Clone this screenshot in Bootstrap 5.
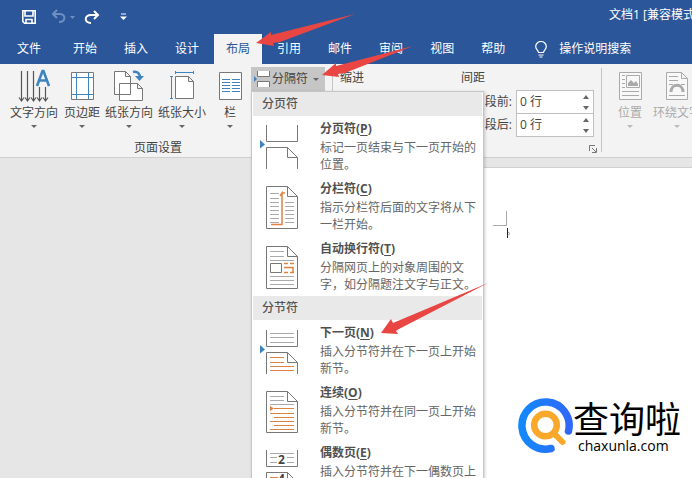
<!DOCTYPE html>
<html lang="zh-CN">
<head>
<meta charset="utf-8">
<meta name="viewport" content="width=device-width, initial-scale=1">
<title>文档1</title>
<link href="https://cdn.jsdelivr.net/npm/bootstrap@5.3.0/dist/css/bootstrap.min.css" rel="stylesheet">
<style>
body{font-family:"Open Sans","Noto Sans CJK SC",sans-serif;font-size:12px;line-height:16px;color:#444;background:#e6e6e6}
svg{display:block;flex:none}
.app-head{background:#2b579a;color:#fff}
.title-bar{height:34px;padding-left:22px;white-space:nowrap}
.quick-btn{border:0;background:none;color:#fff;padding:0}
.doc-title{margin-left:482px;padding-bottom:4px}
.tab-bar{height:30px;padding-left:5px;gap:3px}
.tab-bar .nav-link{color:#fff;padding:7px 12px;height:30px;line-height:16px;border-radius:0}
.tab-bar .nav-link.active{background:#f3f3f3;color:#2b579a}
.tab-file{margin-right:5px}
.tell-me{margin-left:15px;gap:12px;color:#fff;white-space:nowrap}
.ribbon{height:94px;background:#f3f3f3;border-bottom:1px solid #cfcfcf}
.group-page{width:332px;padding:3px 0 0 8px;flex:none}
.tool{border:0;background:none;padding:2px 0 0;color:#444;width:52px;white-space:nowrap;flex:none}
.tool-44{width:44px}.tool-50{width:50px}.tool-56{width:56px}.tool-40{width:40px}
.tool .tool-name{margin-top:2px}
.caret-s{width:0;height:0;border:3px solid transparent;border-top-color:#666;border-bottom:0;margin:4px auto 0}
.group-name{margin-right:24px;margin-top:12px}
.break-area{margin-left:1px}
.break-btn{border:0;border-radius:0;background:#c6c6c6;color:#444;height:24px;width:74px;padding:0 0 0 2px;gap:1px;white-space:nowrap}
.break-btn .caret-s{margin:0 0 0 4px}
.v-rule{width:1px;background:#c4c4c4;margin:4px 0 5px;flex:none}
.group-para{width:268px;padding:6px 0 0 7px;flex:none}
.indent-col{width:121px}
.space-row{padding:0 7px 0 0}
.spin-box{width:78px;height:24px;border:1px solid #c0c0c0;background:#fff;margin-bottom:-1px}
.spin-box input{border:0;background:none;width:56px;padding:0 3px;color:#444;outline:0}
.spin-box button{border:0;background:none;padding:0;width:15px;height:11px}
.spin-box button svg{margin:auto}
.group-pos{padding:3px 0 0 3px}
.group-pos .tool{color:#aaa}
.group-pos .caret-s{border-top-color:#bbb}
.break-menu{top:24px;left:0;width:233px;min-width:0;padding:0;border:1px solid #c6c6c6;border-radius:0;box-shadow:1px 1px 3px #0003;background:#fff;font-size:12px;color:#666}
.break-menu .dropdown-header{height:24px;padding:4px 9px;margin:0 1px;background:#e9e9e9;color:#555;font-size:12px;line-height:16px;font-weight:500}
.break-menu .dropdown-item{height:60px;padding:5px 5px 3px 6px;color:#666;font-size:12px;line-height:17px;gap:21px}
.break-menu .dropdown-item svg{margin-top:1px}
.item-name{line-height:16px;margin-bottom:2px;font-weight:700;color:#505050}
.item-name u{text-underline-offset:2px}
.paper{background:#fff;margin:9px 0 0 252px;border-top:1px solid #d0d0d0;padding:43px 0 0 240px}
.arrows{left:0;top:0;pointer-events:none;z-index:1100}
.brand{right:11px;bottom:24px;color:#000}
.brand-logo{margin-top:2px}
.brand-cn{font-size:36px;line-height:42px;font-family:"Noto Sans CJK SC",sans-serif}
.brand-en{font-size:14px;font-weight:500;line-height:16px;padding-left:5px}
</style>
<script src="https://cdn.jsdelivr.net/npm/bootstrap@5.3.0/dist/js/bootstrap.bundle.min.js"></script>
</head>
<body class="vh-100 overflow-hidden position-relative d-flex flex-column">
<header class="app-head">
  <div class="title-bar d-flex align-items-center">
    <button class="quick-btn" aria-label="保存"><svg width="14" height="14" fill="none" stroke="#fff" stroke-width="1.6"><path d="M.8.8h12.4v12.4H2.5L.8 11.500z"/><path d="M3 1v5h8V1M4 13V9.500h6V13"/></svg></button>
    <button class="quick-btn ms-3" aria-label="撤销"><svg width="24" height="16" fill="none" stroke="#6f8fc0" stroke-width="2"><path d="M5 1 1 5l4 4M1 5h7c6 0 6 8-1 8"/><path d="M18 7h5l-2.500 3z" fill="#6f8fc0" stroke="none"/></svg></button>
    <button class="quick-btn ms-2" aria-label="重做"><svg width="16" height="15" fill="none" stroke="#fff" stroke-width="2"><path d="M10 1l4 4-4 4M14 5H7C0 5 0 13 7 13"/></svg></button>
    <button class="quick-btn ms-3 ps-1" aria-label="自定义"><svg width="7" height="8"><path d="M1 1h5" stroke="#fff"/><path d="M0 3.500h7L3.500 7z" fill="#fff"/></svg></button>
    <span class="doc-title">文档1 [兼容模式]</span>
  </div>
  <nav class="tab-bar nav flex-nowrap align-items-center text-nowrap">
    <a class="nav-link tab-file" href="#">文件</a>
    <a class="nav-link" href="#">开始</a>
    <a class="nav-link" href="#">插入</a>
    <a class="nav-link" href="#">设计</a>
    <a class="nav-link active" aria-current="page" href="#">布局</a>
    <a class="nav-link" href="#">引用</a>
    <a class="nav-link" href="#">邮件</a>
    <a class="nav-link" href="#">审阅</a>
    <a class="nav-link" href="#">视图</a>
    <a class="nav-link" href="#">帮助</a>
    <a class="tell-me d-flex align-items-center text-decoration-none" href="#"><svg width="12" height="17" fill="none" stroke="#fff" stroke-width="1.200"><path d="M3.500 11.500c0-2-2.800-3-2.800-6a5.300 5 0 0 1 10.600 0c0 3-2.800 4-2.800 6zM3.500 14h5M4.500 16h3"/></svg>操作说明搜索</a>
  </nav>
</header>

<section class="ribbon d-flex" aria-label="布局">
  <div class="group-page">
    <div class="d-flex align-items-start">
      <button class="tool"><svg class="mx-auto" width="32" height="34" fill="none" stroke="#555"><path d="M3.500 2v29M9.500 2v29M15.500 2v29M21.500 18v13M27.500 18v13M1 28.500 3.500 32 6 28.500M7 28.500 9.500 32 12 28.500M13 28.500 15.500 32 18 28.500M19 28.500 21.500 32 24 28.500M25 28.500 27.500 32 30 28.500" stroke-width="1.200"/><path d="M19 17 24.500 2h1L31 17M21 11.500h8" stroke="#3f83bf" stroke-width="2.600"/></svg><div class="tool-name">文字方向</div><div class="caret-s"></div></button>
      <button class="tool tool-44"><svg class="mx-auto" width="24" height="34" fill="#fff" stroke="#777"><path d="M1.500 3.500h22v27h-22z"/><path d="M6.500 4v26M18.500 4v26M2 8.500h21M2 25.500h21" stroke="#3f83bf"/></svg><div class="tool-name">页边距</div><div class="caret-s"></div></button>
      <button class="tool tool-50"><svg class="mx-auto" width="32" height="34" fill="#fff" stroke="#777"><path d="M1.500 2.500h11l5 5v18h-16zM12.500 2.500v5h5M6.500 14.500h18l5 5v12h-23zM24.500 14.500v5h5"/><path d="M20 3c5-1 7 2 7 6" fill="none" stroke="#3f83bf" stroke-width="2.500"/><path d="M22 7h9l-4.500 5z" fill="#3f83bf" stroke="none"/></svg><div class="tool-name">纸张方向</div><div class="caret-s"></div></button>
      <button class="tool tool-56"><svg class="mx-auto" width="26" height="34" fill="#fff" stroke="#777"><path d="M6.500 7.500h13l5 5v17h-18zM19.500 7.500v5h5"/><path d="M6 3.500h19M6.500 2v3M24.500 2v3M2.500 7v23M1 7.500h3M1 29.500h3" stroke="#3f83bf"/></svg><div class="tool-name">纸张大小</div><div class="caret-s"></div></button>
      <button class="tool tool-40"><svg class="mx-auto" width="24" height="34" fill="#fff" stroke="#777"><path d="M1.500 3.500h22v27h-22z"/><path d="M4 10.500h8M14 10.500h8M4 13.500h8M14 13.500h8M4 16.500h8M14 16.500h8M4 19.500h8M14 19.500h8M4 22.500h8M14 22.500h8" stroke="#3f83bf"/></svg><div class="tool-name">栏</div><div class="caret-s"></div></button>
      <div class="dropdown break-area">
        <button class="break-btn d-flex align-items-center" aria-expanded="true"><svg width="18" height="20" fill="#fff" stroke="#777"><path d="M4.500 2v5.500h12V2M4.500 18v-5.500h12V18"/><path d="M1 7l3 3-3 3z" fill="#3f83bf" stroke="none"/></svg><span>分隔符</span><span class="caret-s"></span></button>
        <div class="dropdown-menu show break-menu position-absolute m-0">
          <h6 class="dropdown-header">分页符</h6>
          <button class="dropdown-item d-flex text-wrap"><svg width="41" height="48" fill="none" stroke="#777"><path d="M8.500 3v16.500h31V3M8.500 47V25.500h21l10 10V47M29.500 25.500v10h10"/><path d="M2 18l5 4.500-5 4z" fill="#3f83bf" stroke="none"/></svg><div><div class="item-name">分页符(<u>P</u>)</div>标记一页结束与下一页开始的位置。</div></button>
          <button class="dropdown-item d-flex text-wrap"><svg width="41" height="48" fill="none" stroke="#777"><path d="M8.500 4.500h21l10 10v32h-31zM29.500 4.500v10h10"/><path d="M12 11.500h9M12 16.500h9M12 20.500h9M12 24.500h9M12 28.500h9M12 32.500h9M12 36.500h9M12 40.500h9M27 20.500h9M27 24.500h9M27 28.500h9M27 32.500h9M27 36.500h9M27 40.500h9" stroke="#aaa"/><path d="M13 42.500h11V11l-2 3M24 11h3" stroke="#dd8344" stroke-width="1.500"/></svg><div><div class="item-name">分栏符(<u>C</u>)</div>指示分栏符后面的文字将从下一栏开始。</div></button>
          <button class="dropdown-item d-flex text-wrap"><svg width="41" height="48" fill="none" stroke="#777"><path d="M8.500 4.500h21l10 10v32h-31zM29.500 4.500v10h10M12.500 21.500h11v9h-11z"/><path d="M12 9.500h14M12 14.500h14M12 18.500h24M12 34.500h24M12 38.500h24M12 42.500h24" stroke="#aaa"/><path d="M26 21.500h4M32 21.500h4M26 25.500h9v5M26 30.500h4M32 30.500h4" stroke="#dd8344" stroke-width="1.500"/></svg><div><div class="item-name">自动换行符(<u>T</u>)</div>分隔网页上的对象周围的文字，如分隔题注文字与正文。</div></button>
          <h6 class="dropdown-header">分节符</h6>
          <button class="dropdown-item d-flex text-wrap"><svg width="41" height="48" fill="none" stroke="#777"><path d="M8.500 4v16.500h31V4M8.500 48V26.500h21l10 10V48M29.500 26.500v10h10"/><path d="M12 7.500h24M12 11.500h24M12 16.500h24" stroke="#aaa"/><path d="M12 31.500h14M12 36.500h14M12 40.500h24M12 44.500h24" stroke="#dd8344"/><path d="M2 19l5 4.500-5 4z" fill="#3f83bf" stroke="none"/></svg><div><div class="item-name">下一页(<u>N</u>)</div>插入分节符并在下一页上开始新节。</div></button>
          <button class="dropdown-item d-flex text-wrap"><svg width="41" height="48" fill="none" stroke="#777"><path d="M8.500 5.500h21l10 10v31h-31zM29.500 5.500v10h10"/><path d="M12 10.500h14M12 14.500h14M12 18.500h24" stroke="#aaa"/><path d="M16 22.500h20M12 27.500h24M16 31.500h20M12 35.500h24M16 39.500h20M12 43.500h24" stroke="#dd8344"/><path d="M12 20l4 2.500-4 2.500z" fill="#dd8344" stroke="none"/></svg><div><div class="item-name">连续(<u>O</u>)</div>插入分节符并在同一页上开始新节。</div></button>
          <button class="dropdown-item d-flex text-wrap"><svg width="41" height="48" fill="none" stroke="#777"><path d="M8.500 4v16.500h31V4M8.500 48V26.500h21l10 10V48M29.500 26.500v10h10"/><path d="M12 7.500h24M12 11.500h7M29 11.500h7M12 16.500h7M29 16.500h7" stroke="#aaa"/><path d="M12 31.500h8M12 36.500h6" stroke="#dd8344"/><text x="20" y="18" font-size="12" font-weight="700" fill="#444" stroke="none">2</text><text x="20" y="37" font-size="12" font-weight="700" fill="#444" stroke="none">4</text></svg><div><div class="item-name">偶数页(<u>E</u>)</div>插入分节符并在下一偶数页上开始新节。</div></button>
        </div>
      </div>
    </div>
    <div class="group-name text-center">页面设置</div>
  </div>
  <div class="v-rule"></div>
  <div class="group-para d-flex flex-column">
    <div class="d-flex"><div class="indent-col">缩进</div><div>间距</div></div>
    <div class="mt-1">
      <div class="space-row d-flex justify-content-end align-items-center"><label class="me-1" for="before">段前:</label><div class="spin-box d-flex align-items-center"><input id="before" type="text" value="0 行"><div class="ms-auto"><button class="d-flex" aria-label="增加段前"><svg width="6" height="4"><path d="M0 4l3-4 3 4z" fill="#666"/></svg></button><button class="d-flex" aria-label="减少段前"><svg width="6" height="4"><path d="M0 0l3 4 3-4z" fill="#666"/></svg></button></div></div></div>
      <div class="space-row d-flex justify-content-end align-items-center"><label class="me-1" for="after">段后:</label><div class="spin-box d-flex align-items-center"><input id="after" type="text" value="0 行"><div class="ms-auto"><button class="d-flex" aria-label="增加段后"><svg width="6" height="4"><path d="M0 4l3-4 3 4z" fill="#666"/></svg></button><button class="d-flex" aria-label="减少段后"><svg width="6" height="4"><path d="M0 0l3 4 3-4z" fill="#666"/></svg></button></div></div></div>
    </div>
    <button class="quick-btn ms-auto mt-auto me-1 mb-1" aria-label="段落设置"><svg width="8" height="8" fill="none" stroke="#777"><path d="M.5 6V.5H6M3 3l4 4M7.500 3v4.500H3"/></svg></button>
  </div>
  <div class="v-rule"></div>
  <div class="group-pos d-flex align-items-start">
    <button class="tool tool-50" disabled><svg class="mx-auto" width="24" height="34" fill="#f8f8f8" stroke="#aaa"><path d="M1.500 3.500h22v27h-22z"/><path d="M4 6.500h3M4 10.500h3M4 14.500h3M4 18.500h3M4 22.500h17M4 26.500h17M8.500 6.500h13v12h-13z"/><path d="M10 17v-3l3-3 3 3 2-2 2 3v2z" fill="#aaa" stroke="none"/></svg><div class="tool-name">位置</div><div class="caret-s"></div></button>
    <button class="tool tool-44" disabled><svg class="mx-auto" width="24" height="34" fill="#f8f8f8" stroke="#aaa"><path d="M1.500 3.500h15l6 6v21h-21zM16.500 3.500v6h6M4 7.500h9M4 11.500h9M4 15.500h4M16 15.500h4M4 26.500h16"/><path d="M6 23c0-9 12-9 12 0" fill="none" stroke-width="3"/></svg><div class="tool-name d-flex justify-content-center">环绕文字</div><div class="caret-s"></div></button>
  </div>
</section>

<main class="paper flex-fill">
  <svg width="18" height="30" fill="none" stroke="#aaa"><path d="M14.500 0v14.500H1"/><path d="M15.500 17v10" stroke="#222"/><path d="M16 21l2 1.500-2 2" stroke="#999"/></svg>
</main>

<div class="brand position-absolute d-flex align-items-start">
  <svg class="brand-logo" width="55" height="56" fill="none" stroke-linecap="round"><defs><linearGradient id="ring" x1="0" x2="1"><stop stop-color="#1488fb"/><stop offset="1" stop-color="#2f68fa"/></linearGradient></defs><path d="M50.500 33A23.600 23.600 0 1 0 33 50.500" stroke="url(#ring)" stroke-width="7.500"/><circle cx="27.500" cy="27" r="11.300" stroke="#faa829" stroke-width="6.500"/><path d="M37 36.500l7.500 7.500" stroke="#faa829" stroke-width="6"/></svg>
  <div><div class="brand-cn">查询啦</div><div class="brand-en">chaxunla.com</div></div>
</div>

<svg class="arrows position-absolute" width="490" height="340" fill="#e94643"><path d="M256 43 271 32v3l84-21-75 28-7 1 1 3zM322 75 336 63v3l77-20-68 27-7 1 1 3zM381 333 391 319l2 4 95-40-89 46-3 2 2 3z"/></svg>
</body>
</html>
